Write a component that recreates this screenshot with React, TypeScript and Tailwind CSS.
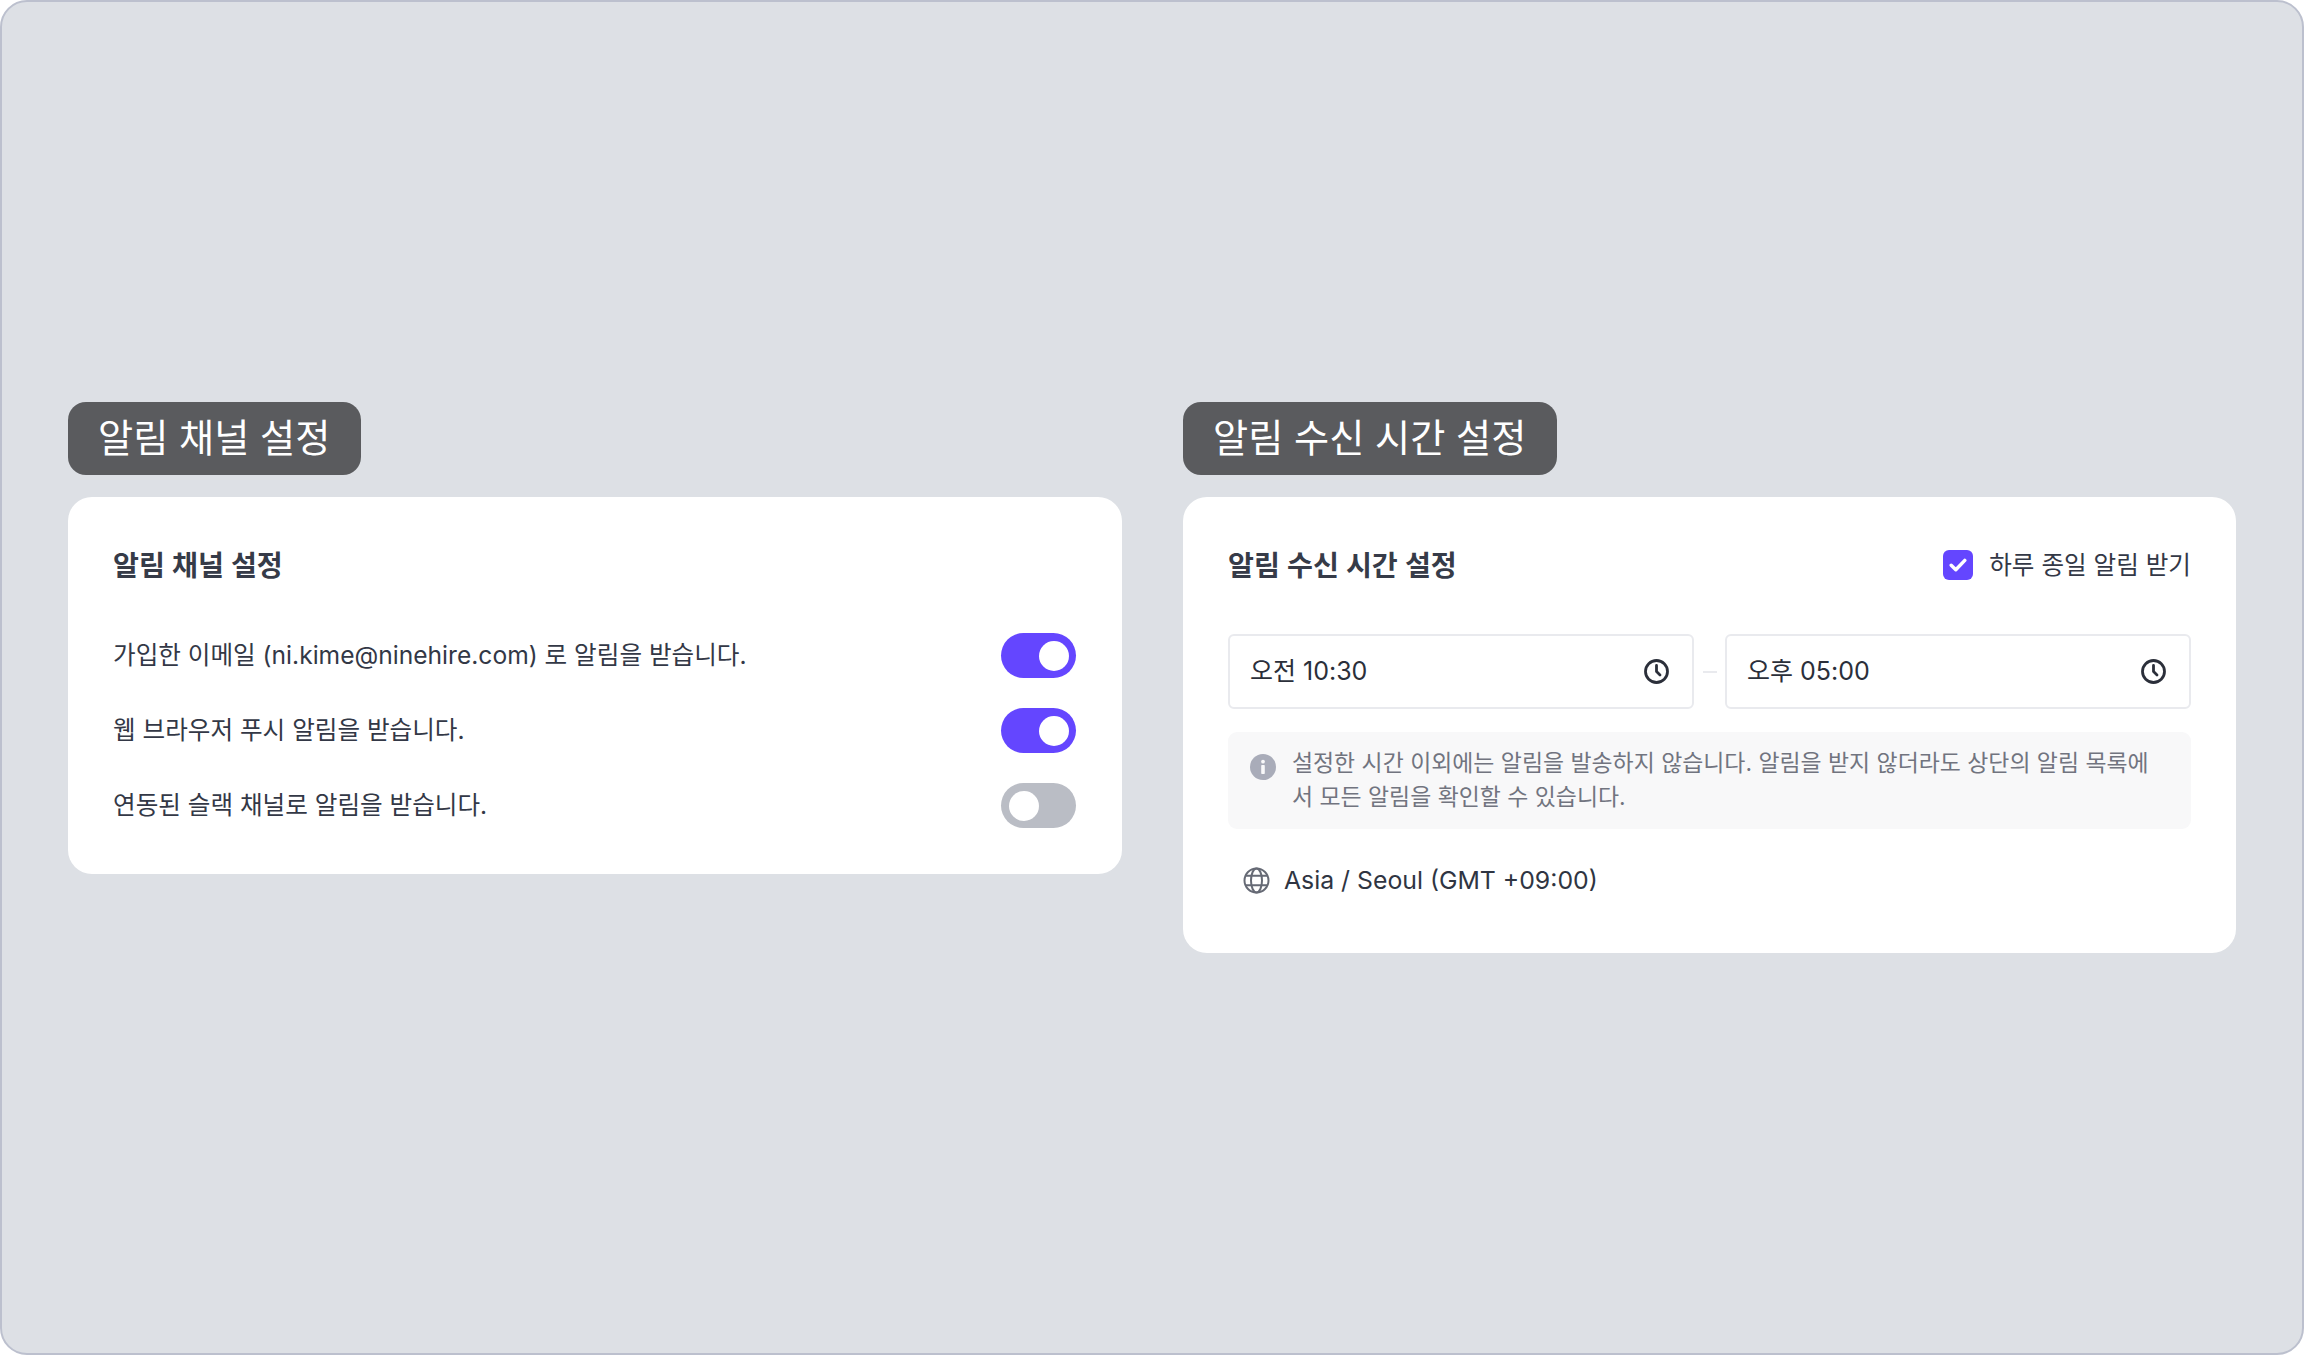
import React from 'react';

const FONT = "font-['Inter','Noto_Sans_CJK_KR',sans-serif]";

const Badge = ({ label }: { label: string }) => (
  <div className="self-start h-[73px] pl-[30px] pr-[31px] flex items-center rounded-[18px] bg-[#5a5b5e] text-white text-[38.2px]">
    {label}
  </div>
);

const Toggle = ({ on }: { on: boolean }) => (
  <div className={`w-[75px] h-[45px] rounded-full flex items-center px-[7.5px] ${on ? 'bg-[#6446ff] justify-end' : 'bg-[#babdc5] justify-start'}`}>
    <div className="w-[30px] h-[30px] rounded-full bg-white" />
  </div>
);

const ClockIcon = () => (
  <svg width="27" height="27" viewBox="0 0 27 27" fill="none" stroke="#2b2f3a" strokeWidth="2.8" strokeLinecap="round" strokeLinejoin="round">
    <circle cx="13.5" cy="13.5" r="11" />
    <path d="M13.5 7.5v6l3.5 3.5" />
  </svg>
);

const TimeInput = ({ value }: { value: string }) => (
  <div className="flex-1 h-[75px] flex items-center justify-between pl-[20px] pr-[22px] bg-white border-2 border-[#e9eaee] rounded-[6px] text-[25px] text-[#2b2f3a]">
    <span>{value}</span>
    <ClockIcon />
  </div>
);

const channels = [
  { label: '가입한 이메일 (ni.kime@ninehire.com) 로 알림을 받습니다.', on: true },
  { label: '웹 브라우저 푸시 알림을 받습니다.', on: true },
  { label: '연동된 슬랙 채널로 알림을 받습니다.', on: false },
];

export default function App() {
  return (
    <div className={`${FONT} w-[2304px] h-[1355px] bg-[#dde0e5] border-2 border-[#bcc0ce] rounded-[27px] overflow-hidden pt-[400px] pl-[66px] flex items-start gap-[61px]`}>
      {/* channel settings */}
      <div className="w-[1054px] flex flex-col gap-[22px]">
        <Badge label="알림 채널 설정" />
        <div className="bg-white rounded-[24px] h-[377px] pt-[51px] pl-[45px] pr-[46px]">
          <h2 className="text-[28.2px] leading-[36px] font-semibold text-[#363b48]">알림 채널 설정</h2>
          <div className="mt-[49px] flex flex-col gap-[30px]">
            {channels.map((c) => (
              <div key={c.label} className="flex items-center justify-between text-[24.6px] text-[#333846]">
                <span>{c.label}</span>
                <Toggle on={c.on} />
              </div>
            ))}
          </div>
        </div>
      </div>

      {/* receive time settings */}
      <div className="w-[1053px] flex flex-col gap-[22px]">
        <Badge label="알림 수신 시간 설정" />
        <div className="bg-white rounded-[24px] h-[456px] pt-[51px] px-[45px]">
          <div className="flex items-center justify-between h-[36px]">
            <h2 className="text-[28.2px] leading-[36px] font-semibold text-[#363b48]">알림 수신 시간 설정</h2>
            <div className="flex items-center gap-[16px] text-[24.6px] text-[#333846] -translate-y-[1px]">
              <div className="w-[30px] h-[30px] rounded-[6px] bg-[#6446ff] flex items-center justify-center">
                <svg width="18" height="14" viewBox="0 0 18 14" fill="none" stroke="#fff" strokeWidth="3.4" strokeLinecap="round" strokeLinejoin="round">
                  <path d="M2.2 7.2l4.6 4.6L15.8 2.4" />
                </svg>
              </div>
              <span>하루 종일 알림 받기</span>
            </div>
          </div>

          <div className="mt-[50px] flex items-center">
            <TimeInput value="오전 10:30" />
            <div className="w-[31px] flex justify-center">
              <div className="w-[14px] h-[2px] bg-[#e9eaee]" />
            </div>
            <TimeInput value="오후 05:00" />
          </div>

          <div className="mt-[23px] h-[97px] bg-[#f8f8f9] rounded-[9px] pl-[22px] pr-[30px] flex items-start gap-[16px]">
            <svg className="mt-[22px] shrink-0" width="26" height="26" viewBox="0 0 26 26">
              <circle cx="13" cy="13" r="13" fill="#a9acb9" />
              <circle cx="13" cy="7.6" r="1.9" fill="#f8f8f9" />
              <rect x="11.2" y="11" width="3.6" height="9" rx="0.8" fill="#f8f8f9" />
            </svg>
            <p className="pt-[14px] text-[22.9px] leading-[34px] text-[#71747f]">
              설정한 시간 이외에는 알림을 발송하지 않습니다. 알림을 받지 않더라도 상단의 알림 목록에서 모든 알림을 확인할 수 있습니다.
            </p>
          </div>

          <div className="mt-[33px] pl-[15px] flex items-center gap-[14px] text-[24.8px] text-[#2f3542]">
            <svg width="27" height="27" viewBox="0 0 27 27" fill="none" stroke="#666a75" strokeWidth="2">
              <circle cx="13.5" cy="13.5" r="12" />
              <ellipse cx="13.5" cy="13.5" rx="5.5" ry="12" />
              <path d="M3 8.8h21M3 18.2h21" />
            </svg>
            <span>Asia / Seoul (GMT +09:00)</span>
          </div>
        </div>
      </div>
    </div>
  );
}
